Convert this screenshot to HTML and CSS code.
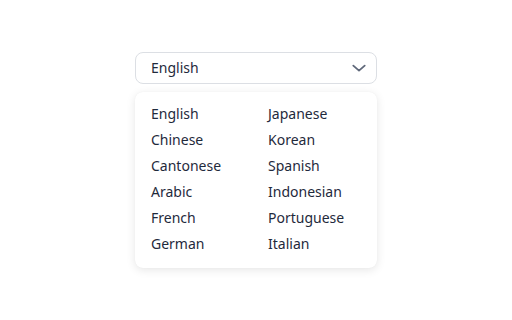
FILE: index.html
```html
<!DOCTYPE html>
<html lang="en">
<head>
<meta charset="utf-8">
<link rel="stylesheet" href="styles.css">
</head>
<body>
<div class="page">
  <div class="select-wrap">
    <div class="select">
      <span class="value">English</span>
      <svg class="chevron" width="14" height="8" viewBox="0 0 14 8"><path d="M1.3 1.6 L7 6.6 L12.7 1.6" fill="none" stroke="#5f687a" stroke-width="1.8" stroke-linecap="round" stroke-linejoin="round"/></svg>
    </div>
    <div class="menu">
      <div class="option">English</div>
      <div class="option">Japanese</div>
      <div class="option">Chinese</div>
      <div class="option">Korean</div>
      <div class="option">Cantonese</div>
      <div class="option">Spanish</div>
      <div class="option">Arabic</div>
      <div class="option">Indonesian</div>
      <div class="option">French</div>
      <div class="option">Portuguese</div>
      <div class="option">German</div>
      <div class="option">Italian</div>
    </div>
  </div>
</div>
</body>
</html>
```
FILE: styles.css
```css
* { box-sizing: border-box; }
html, body { margin: 0; padding: 0; background: #ffffff; }
body {
  font-family: "Noto Sans", "Open Sans", sans-serif;
  font-size: 14px;
  color: #1f2a3c;
  width: 512px;
  height: 320px;
  overflow: hidden;
}
.page {
  padding: 52px 0 0 135px;
}
.select-wrap {
  width: 242px;
  display: flex;
  flex-direction: column;
  gap: 8px;
}
.select {
  height: 32px;
  border: 1px solid #dcdfe4;
  border-radius: 8px;
  display: flex;
  align-items: center;
  justify-content: space-between;
  padding: 0 10px 0 15px;
}
.value { line-height: 20px; }
.chevron { display: block; }
.menu {
  background: #fff;
  border-radius: 8px;
  box-shadow: 0 2px 10px rgba(0, 0, 0, 0.1), 0 0 1px rgba(0,0,0,0.06);
  padding: 9px 16px 11px 16px;
  display: grid;
  grid-template-columns: 117px 1fr;
  grid-auto-rows: 26px;
}
.option {
  line-height: 26px;
  white-space: nowrap;
}
```
